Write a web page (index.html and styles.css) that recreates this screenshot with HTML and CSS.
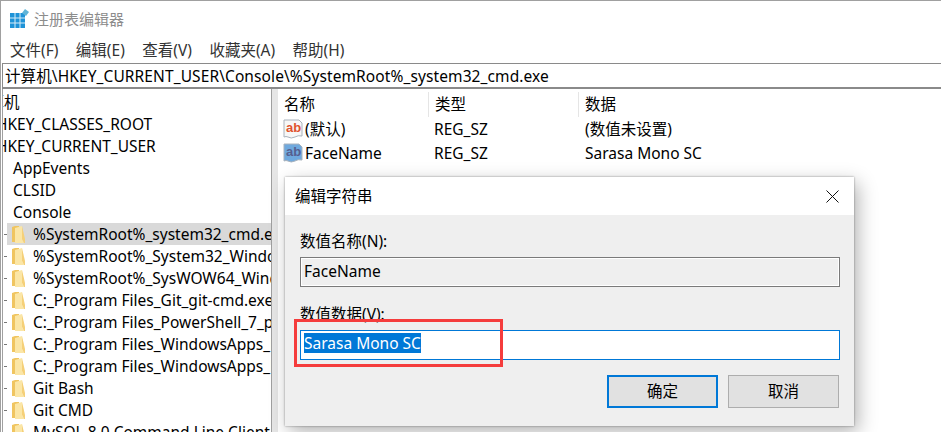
FILE: index.html
```html
<!DOCTYPE html>
<html lang="zh-CN">
<head>
    <meta charset="UTF-8">
    <meta name="viewport" content="width=device-width, initial-scale=1.0">
    <title>注册表编辑器</title>
    <link rel="stylesheet" href="styles.css">
</head>
<body>
    <svg class="defs" width="0" height="0">
        <symbol id="folder" viewBox="0 0 13 20">
            <path d="M0 3 L3 2 H7 V17 L4 18 H0 Z" fill="#f0c560"/>
            <path d="M3 4 L10 2 V15 L12 19 H3 Z" fill="#fbe6a6"/>
            <path d="M10 2 L13 15 V19 H12 L10 15 Z" fill="#f5d078"/>
        </symbol>
        <symbol id="ab" viewBox="0 0 20 20">
            <path d="M1 1 H16 L19 4 V17 Q15 16 12 18 Q8 20 5 18 Q3 17 1 18 Z" fill="currentColor" stroke="#a9b2bc"/>
        </symbol>
    </svg>

    <div class="window">
        <div class="titlebar">
            <svg class="app-icon" width="20" height="20" viewBox="0 0 20 20">
                <rect x="0" y="4" width="15" height="15" fill="#1f93d8"/>
                <path d="M5 4 V19 M10 4 V19 M0 9 H15 M0 14 H15" stroke="#d6ecf8" stroke-width="1"/>
                <path d="M15 0 L19 3 L16 7 L12 4 Z" fill="#5fb4d8"/>
            </svg>
            <span>注册表编辑器</span>
        </div>
        <div class="menubar">
            <span>文件(F)</span>
            <span>编辑(E)</span>
            <span>查看(V)</span>
            <span>收藏夹(A)</span>
            <span>帮助(H)</span>
        </div>
        <div class="address">计算机\HKEY_CURRENT_USER\Console\%SystemRoot%_system32_cmd.exe</div>

        <div class="panes">
            <div class="tree">
                <div class="row root">计算机</div>
                <div class="row hive">HKEY_CLASSES_ROOT</div>
                <div class="row hive">HKEY_CURRENT_USER</div>
                <div class="row plain">AppEvents</div>
                <div class="row plain">CLSID</div>
                <div class="row plain">Console</div>
                <div class="row key"><i class="dots"></i><div class="key-body selected"><svg class="folder"><use href="#folder"/></svg><span>%SystemRoot%_system32_cmd.exe</span></div></div>
                <div class="row key"><i class="dots"></i><div class="key-body"><svg class="folder"><use href="#folder"/></svg><span>%SystemRoot%_System32_WindowsPowerShell</span></div></div>
                <div class="row key"><i class="dots"></i><div class="key-body"><svg class="folder"><use href="#folder"/></svg><span>%SystemRoot%_SysWOW64_WindowsPowerShell</span></div></div>
                <div class="row key"><i class="dots"></i><div class="key-body"><svg class="folder"><use href="#folder"/></svg><span>C:_Program Files_Git_git-cmd.exe</span></div></div>
                <div class="row key"><i class="dots"></i><div class="key-body"><svg class="folder"><use href="#folder"/></svg><span>C:_Program Files_PowerShell_7_pwsh.exe</span></div></div>
                <div class="row key"><i class="dots"></i><div class="key-body"><svg class="folder"><use href="#folder"/></svg><span>C:_Program Files_WindowsApps_Microsoft</span></div></div>
                <div class="row key"><i class="dots"></i><div class="key-body"><svg class="folder"><use href="#folder"/></svg><span>C:_Program Files_WindowsApps_Microsoft</span></div></div>
                <div class="row key"><i class="dots"></i><div class="key-body"><svg class="folder"><use href="#folder"/></svg><span>Git Bash</span></div></div>
                <div class="row key"><i class="dots"></i><div class="key-body"><svg class="folder"><use href="#folder"/></svg><span>Git CMD</span></div></div>
                <div class="row key"><i class="dots"></i><div class="key-body"><svg class="folder"><use href="#folder"/></svg><span>MySQL 8.0 Command Line Client</span></div></div>
            </div>
            <div class="splitter"></div>
            <div class="values">
                <div class="val-head">
                    <span class="col-name">名称</span>
                    <span class="col-type">类型</span>
                    <span class="col-data">数据</span>
                </div>
                <div class="val-row">
                    <span class="col-name">
                        <svg class="ab ab-red"><use href="#ab"/></svg>
                        <b class="ab-text red">ab</b>(默认)
                    </span>
                    <span class="col-type">REG_SZ</span>
                    <span class="col-data">(数值未设置)</span>
                </div>
                <div class="val-row">
                    <span class="col-name">
                        <svg class="ab ab-blue"><use href="#ab"/></svg>
                        <b class="ab-text blue">ab</b>FaceName
                    </span>
                    <span class="col-type">REG_SZ</span>
                    <span class="col-data">Sarasa Mono SC</span>
                </div>
            </div>
        </div>
    </div>

    <div class="dialog">
        <div class="dialog-title">
            <span>编辑字符串</span>
            <svg class="close" width="13" height="13" viewBox="0 0 13 13">
                <path d="M.5 .5 L12.5 12.5 M12.5 .5 L.5 12.5" stroke="#111" stroke-width="1"/>
            </svg>
        </div>
        <div class="dialog-body">
            <div class="label">数值名称(N):</div>
            <div class="field readonly">FaceName</div>
            <div class="label second">数值数据(V):</div>
            <div class="field active"><span class="sel">Sarasa Mono SC</span></div>
            <div class="buttons">
                <div class="btn primary">确定</div>
                <div class="btn">取消</div>
            </div>
        </div>
    </div>
    <div class="highlight"></div>
</body>
</html>
```

FILE: styles.css
```css
* {
    box-sizing: border-box;
}

html, body {
    margin: 0;
    height: 100%;
}

body {
    position: relative;
    overflow: hidden;
    background: #fff;
    color: #000;
    font-family: "Noto Sans", "Noto Sans CJK SC", sans-serif;
    font-size: 15.5px;
    line-height: 22px;
}

.defs {
    position: absolute;
}

.window {
    height: 432px;
    display: flex;
    flex-direction: column;
    border-top: 1px solid #a0a0a0;
    border-left: 1px solid #a0a0a0;
}

.titlebar {
    height: 36px;
    display: flex;
    align-items: center;
    gap: 4px;
    padding: 0 0 0 9px;
    color: #8c8c8c;
    font-size: 15px;
}

.app-icon {
    flex: none;
}

.menubar {
    height: 25px;
    display: flex;
    gap: 17.5px;
    padding: 0 0 0 9px;
    align-items: center;
    color: #333;
}

.address {
    height: 26px;
    margin: 1px 0 0 1px;
    padding-left: 2px;
    border: 1px solid #8a8a8a;
    border-width: 1px 0 2px 1px;
    line-height: 25px;
    letter-spacing: .1px;
    white-space: nowrap;
}

.panes {
    flex: 1;
    display: flex;
    min-height: 0;
}

.tree {
    width: 269px;
    margin-left: 1px;
    padding-top: 2px;
    overflow: hidden;
    border-left: 1px solid #a0a0a0;
}

.row {
    height: 22px;
    white-space: nowrap;
}

.root {
    margin-left: -30px;
}

.hive {
    margin-left: -7px;
}

.plain {
    padding-left: 10px;
}

.key {
    display: flex;
    align-items: center;
    padding-left: 1px;
}

.key-body {
    flex: 1;
    min-width: 0;
    height: 22px;
    display: flex;
    align-items: center;
    padding-left: 5px;
    overflow: hidden;
}

.selected {
    background: #d9d9d9;
}

.dots {
    width: 2px;
    margin-right: 1px;
    border-top: 1px dotted #777;
    flex: none;
}

.folder {
    width: 13px;
    height: 20px;
    flex: none;
    margin-right: 8px;
}

.splitter {
    width: 7px;
    background: #e6e6e6;
    border-left: 1px solid #a0a0a0;
    flex: none;
}

.values {
    flex: 1;
    padding-top: 3px;
}

.val-head {
    display: flex;
    height: 25px;
    align-items: center;
}

.val-head span + span {
    border-left: 1px solid #e5e5e5;
}

.val-head span {
    height: 25px;
    line-height: 24px;
}

.col-name {
    width: 150px;
    padding-left: 6px;
    position: relative;
    white-space: nowrap;
}

.col-type {
    width: 150px;
    padding-left: 6px;
}

.col-data {
    padding-left: 6px;
}

.val-row {
    display: flex;
    height: 24px;
    align-items: center;
}

.val-row .col-name {
    padding-left: 27px;
}

.val-row .col-data {
    padding-left: 7px;
}

.ab {
    position: absolute;
    left: 5px;
    top: 1px;
    width: 20px;
    height: 20px;
}

.ab-red {
    color: #f7f7f7;
}

.ab-blue {
    color: #6fa9de;
}

.ab-text {
    position: absolute;
    left: 8px;
    top: -1px;
    font-family: "Liberation Sans", sans-serif;
    font-size: 13px;
    font-weight: bold;
}

.ab-text.red {
    color: #e0532f;
}

.ab-text.blue {
    color: #565f90;
}

.dialog {
    position: absolute;
    left: 285px;
    top: 177px;
    width: 569px;
    height: 249px;
    background: #efefef;
    box-shadow: 0 0 2px rgba(0, 0, 0, .4), 4px 6px 18px rgba(0, 0, 0, .3);
}

.dialog-title {
    height: 38px;
    display: flex;
    align-items: center;
    justify-content: space-between;
    padding: 0 15px 0 10px;
    background: #fff;
}

.dialog-body {
    padding: 15px 14px 0 15px;
}

.label {
    height: 22px;
}

.second {
    margin-top: 16px;
}

.field {
    height: 30px;
    padding: 0 3px;
    line-height: 27px;
    margin-top: 5px;
}

.readonly {
    border: 1px solid #7a7a7a;
    outline: 1px solid #fff;
    outline-offset: -2px;
}

.active {
    border: 1px solid #0078d7;
    background: #fff;
}

.sel {
    display: inline-block;
    height: 20px;
    margin-top: 2px;
    line-height: 20px;
    background: #0078d7;
    color: #fff;
    vertical-align: top;
}

.buttons {
    display: flex;
    justify-content: flex-end;
    gap: 10px;
    margin-top: 15px;
    padding-right: 1px;
}

.btn {
    width: 111px;
    height: 33px;
    line-height: 30px;
    text-align: center;
    background: #e1e1e1;
    border: 1px solid #adadad;
}

.primary {
    border: 2px solid #0078d7;
    line-height: 28px;
}

.highlight {
    position: absolute;
    left: 294px;
    top: 319px;
    width: 209px;
    height: 48px;
    border: 3px solid #f53c3c;
}
```
